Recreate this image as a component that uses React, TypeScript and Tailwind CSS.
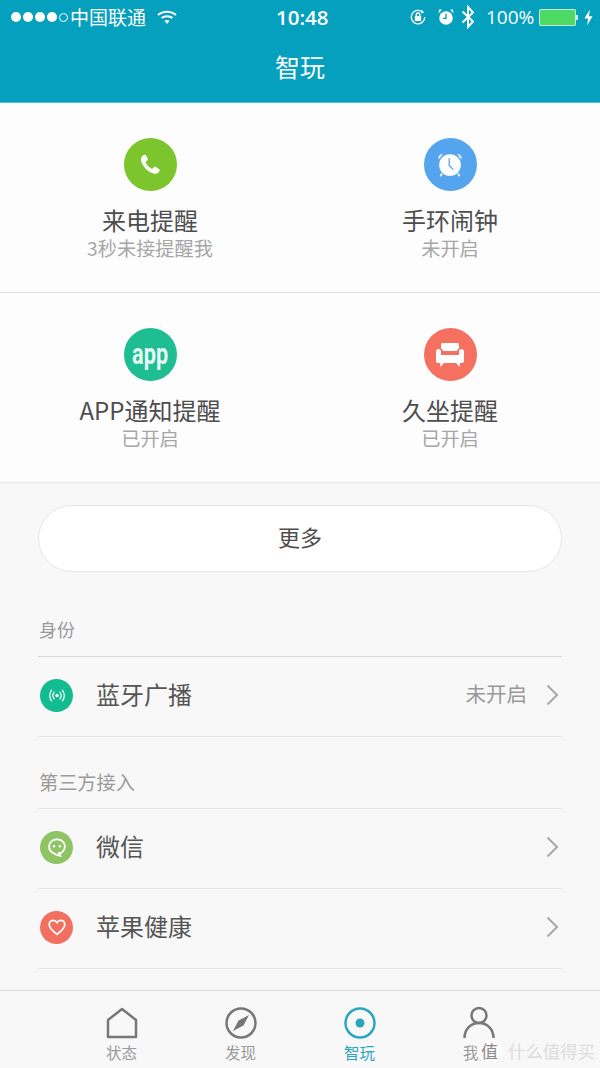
const CJK = "font-['Noto_Sans_CJK_SC','Noto_Sans',sans-serif]";

function Chevron() {
  return (
    <svg width="16" height="24" viewBox="0 0 16 24" fill="none" stroke="#a8a8a8" strokeWidth="2">
      <path d="M4.500 2.500 L14 12 L4.500 21.500" />
    </svg>
  );
}

function PhoneIcon() {
  return (
    <svg width="24" height="24" viewBox="0 0 26 26" fill="#fff">
      <path d="M6.200 2.200 C7.200 1.600 8.200 1.900 8.800 2.900 L10.400 5.900 C10.900 6.800 10.700 7.700 9.900 8.300 L8.600 9.300 C8.200 9.700 8.200 10.100 8.400 10.600 C9.600 13 11.600 15.200 14.400 16.900 C14.900 17.200 15.400 17.200 15.800 16.800 L17 15.600 C17.700 14.900 18.600 14.800 19.400 15.300 L22.600 17.200 C23.600 17.800 23.800 18.900 23.200 19.800 C21.900 21.800 20 22.900 17.800 22.500 C10.800 21 4.600 14.200 3.300 8.400 C2.800 5.800 4 3.600 6.200 2.200 Z" />
    </svg>
  );
}

function ClockIcon() {
  return (
    <svg width="30" height="30" viewBox="0 0 36 36">
      <path d="M4.500 11.500 C3 8 5.500 4.500 9.500 4.800 Z M31.500 11.500 C33 8 30.500 4.500 26.500 4.800 Z" fill="#fff" fillOpacity="0.85" />
      <path d="M8.500 28 L6.500 31.500 M27.500 28 L29.500 31.500" stroke="#fff" strokeWidth="2" />
      <circle cx="18" cy="18" r="13" fill="#fff" />
      <path d="M17 10 L17 18.500 L22 23.500" fill="none" stroke="#55a4ee" strokeWidth="1.500" />
    </svg>
  );
}

function SofaIcon() {
  return (
    <svg width="28" height="24" viewBox="0 0 28 24" fill="#fff">
      <path d="M5 1.500 C5 0.700 5.800 0 6.700 0 L21.300 0 C22.200 0 23 0.700 23 1.500 L23 5.500 C21.800 5.900 21 6.800 21 8 L7 8 C7 6.800 6.200 5.900 5 5.500 Z" />
      <path d="M0 8.500 C0 7 1.200 6 2.500 6 C3.900 6 5 7 5 8.500 L5 12 L23 12 L23 8.500 C23 7 24.100 6 25.500 6 C26.800 6 28 7 28 8.500 L28 18 C28 19 27.200 20 26 20 L2 20 C0.800 20 0 19 0 18 Z" />
      <path d="M4 20 L8 20 L4.500 24 Z M20 20 L24 20 L23.500 24 Z" />
    </svg>
  );
}

function BroadcastIcon() {
  return (
    <svg width="20" height="17" viewBox="0 0 24 20" fill="none" stroke="#fff" strokeWidth="1.500" strokeLinecap="round">
      <circle cx="12" cy="10" r="2" fill="#fff" stroke="none" />
      <path d="M8.500 6 C6.800 8.300 6.800 11.700 8.500 14 M15.500 6 C17.200 8.300 17.200 11.700 15.500 14" />
      <path d="M5.500 3.500 C2.500 7 2.500 13 5.500 16.500 M18.500 3.500 C21.500 7 21.500 13 18.500 16.500" />
    </svg>
  );
}

function WechatIcon() {
  return (
    <svg width="20" height="20" viewBox="0 0 24 24">
      <path d="M12 2.800 C17.500 2.800 21.500 6.500 21.500 11.300 C21.500 16 17.500 19.500 14.500 19.500 L16 22.500 C10 21.500 2.500 18 2.500 11.300 C2.500 6.500 6.500 2.800 12 2.800 Z" fill="none" stroke="#fff" strokeWidth="2.200" />
      <circle cx="8.500" cy="11" r="1.500" fill="#fff" />
      <circle cx="15.500" cy="11" r="1.500" fill="#fff" />
    </svg>
  );
}

function HeartIcon() {
  return (
    <svg width="20" height="18" viewBox="0 0 24 22" fill="none" stroke="#fff" strokeWidth="2.200">
      <path d="M12 20 C6 15.500 2.500 12.500 2.500 8 C2.500 4.800 4.800 2.800 7.500 2.800 C9.300 2.800 11 3.800 12 5.500 C13 3.800 14.700 2.800 16.500 2.800 C19.200 2.800 21.500 4.800 21.500 8 C21.500 12.500 18 15.500 12 20 Z" />
    </svg>
  );
}

function Reminder({ title, sub, bg, children }: { title: string; sub: string; bg: string; children: React.ReactNode }) {
  return (
    <div className="flex flex-col items-center pt-[35px]">
      <div className={`flex h-[53px] w-[53px] items-center justify-center rounded-full ${bg}`}>{children}</div>
      <div className="mt-[13px] whitespace-nowrap text-[24px] leading-[32px] text-[#4d4d4d]">{title}</div>
      <div className="whitespace-nowrap text-[19.200px] leading-[24px] text-[#a6a6a6]">{sub}</div>
    </div>
  );
}

function Row({ label, value, bg, children }: { label: string; value?: string; bg: string; children: React.ReactNode }) {
  return (
    <div className="flex h-[80px] items-center border-b border-[#e3e3e3] pb-[3px] pl-[2px] pr-[3px]">
      <div className={`flex h-[33px] w-[33px] items-center justify-center rounded-full ${bg}`}>{children}</div>
      <div className="ml-[23px] flex-1 pb-[3px] text-[24px] text-[#555555]">{label}</div>
      {value && <div className="mr-[16px] pb-[3px] text-[20.500px] text-[#999999]">{value}</div>}
      <Chevron />
    </div>
  );
}

function Tab({ label, active, children }: { label: string; active?: boolean; children: React.ReactNode }) {
  return (
    <div className="flex w-[119px] flex-col items-center pt-[14px]">
      <div className="flex h-[36px] items-center">{children}</div>
      <div className={`mt-[1px] whitespace-nowrap text-[15.500px] leading-[20px] ${active ? "text-[#2aa7bd]" : "text-[#9a9a9a]"}`}>{label}</div>
    </div>
  );
}

export default function App() {
  return (
    <div className={`relative flex h-[1068px] w-[600px] flex-col overflow-hidden bg-[#f8f8f8] ${CJK}`}>
      {/* Status bar + title */}
      <header className="h-[103px] border-b border-[#4fc3d6] bg-[#05a0be] text-white">
        <div className="flex h-[34px] items-center whitespace-nowrap pl-[11px]">
          <div className="flex items-center gap-[2px]">
            <span className="h-[10px] w-[10px] rounded-full bg-white" />
            <span className="h-[10px] w-[10px] rounded-full bg-white" />
            <span className="h-[10px] w-[10px] rounded-full bg-white" />
            <span className="h-[10px] w-[10px] rounded-full bg-white" />
            <span className="h-[9px] w-[9px] rounded-full border border-white" />
          </div>
          <span className="ml-[2px] w-[76px] text-[19px] leading-[34px]">中国联通</span>
          <svg className="ml-[11px]" width="20" height="15" viewBox="0 0 20 15" fill="none" stroke="#fff" strokeWidth="2">
            <path d="M1 5 C6 0.500 14 0.500 19 5" />
            <path d="M4.500 8 C7.500 5.500 12.500 5.500 15.500 8" />
            <path d="M10 14 L7.500 10.800 C9 9.800 11 9.800 12.500 10.800 Z" fill="#fff" stroke="none" />
          </svg>
          <span className="ml-[99px] w-[54px] font-['Open_Sans',sans-serif] text-[20.500px] font-semibold leading-[34px]">10:48</span>
          <svg className="ml-[79px]" width="18" height="18" viewBox="0 0 20 20" fill="none" stroke="#fff" strokeWidth="1.500">
            <path d="M17.500 10 A7.500 7.500 0 1 1 15 4.500" />
            <path d="M14 2 L17 5 L13.500 6 Z" fill="#fff" stroke="none" />
            <rect x="6.500" y="9" width="7" height="5.500" fill="#fff" stroke="none" />
            <path d="M8 9 V7.500 A2 2 0 0 1 12 7.500 V9" />
          </svg>
          <svg className="ml-[10px]" width="18" height="18" viewBox="0 0 20 20" fill="#fff">
            <circle cx="10" cy="11" r="7.500" />
            <path d="M1.500 6 L5.500 2 L2.500 1.500 Z M18.500 6 L14.500 2 L17.500 1.500 Z" />
            <path d="M10 6.500 V11.500 H6.500" fill="none" stroke="#05a0be" strokeWidth="1.500" />
          </svg>
          <svg className="ml-[6px]" width="14" height="24" viewBox="0 0 14 24" fill="none" stroke="#fff" strokeWidth="2">
            <path d="M1.500 6.500 L12 16.500 L7 22 V2 L12 7.500 L1.500 17.500" />
          </svg>
          <span className="ml-[11px] w-[48px] font-['Open_Sans',sans-serif] text-[19px] leading-[34px]">100%</span>
          <div className="ml-[5px] flex items-center">
            <div className="h-[17px] w-[37px] rounded-[2px] border border-white/70 bg-[#4cd964]" />
            <div className="h-[5px] w-[2px] bg-white/80" />
          </div>
          <svg className="ml-[6px]" width="9" height="17" viewBox="0 0 10 18" fill="#fff">
            <path d="M6.500 0 L0.500 10 H4.500 L3.500 18 L9.500 7.500 H5.500 Z" />
          </svg>
        </div>
        <div className="text-center text-[25px] leading-[64px]">智玩</div>
      </header>

      {/* Reminders */}
      <section className="bg-[#fdfdfd]">
        <div className="grid h-[190px] grid-cols-2 border-b border-[#e0e0e0]">
          <Reminder title="来电提醒" sub="3秒未接提醒我" bg="bg-[#7cc52d]">
            <PhoneIcon />
          </Reminder>
          <Reminder title="手环闹钟" sub="未开启" bg="bg-[#55a4ee]">
            <ClockIcon />
          </Reminder>
        </div>
        <div className="grid h-[190px] grid-cols-2 border-b border-[#e6e6e6]">
          <Reminder title="APP通知提醒" sub="已开启" bg="bg-[#1ebd92]">
            <span className="font-['Roboto',sans-serif] text-[29px] font-bold leading-none text-[#e6f8f3] [transform:scaleX(0.75)]">app</span>
          </Reminder>
          <Reminder title="久坐提醒" sub="已开启" bg="bg-[#f5705f]">
            <SofaIcon />
          </Reminder>
        </div>
      </section>

      <main className="flex-1 px-[38px]">
        <button
          type="button"
          className="mt-[22px] h-[67px] w-full rounded-full border border-[#e6e6e6] bg-white pb-[4px] text-[22px] text-[#4d4d4d]"
        >
          更多
        </button>

        <div className="mt-[44px] pl-[1px] text-[18px] leading-[27px] text-[#9a9a9a]">身份</div>
        <div className="mt-[13px] border-t border-[#d9d9d9]">
          <Row label="蓝牙广播" value="未开启" bg="bg-[#12bb90]">
            <BroadcastIcon />
          </Row>
        </div>

        <div className="mt-[32px] pl-[1px] text-[19.200px] leading-[27px] text-[#9a9a9a]">第三方接入</div>
        <div className="mt-[12px] border-t border-[#e3e3e3]">
          <Row label="微信" bg="bg-[#8fc465]">
            <WechatIcon />
          </Row>
          <Row label="苹果健康" bg="bg-[#f2705f]">
            <HeartIcon />
          </Row>
        </div>
      </main>

      {/* Tab bar */}
      <nav className="flex h-[78px] justify-center border-t border-[#dcdcdc] bg-[#f8f8f8]">
        <Tab label="状态">
          <svg width="32" height="32" viewBox="0 0 32 32" fill="none" stroke="#777777" strokeWidth="2.500" strokeLinejoin="round">
            <path d="M2 13 L16 2 L30 13 V30 H2 Z" />
          </svg>
        </Tab>
        <Tab label="发现">
          <svg width="32" height="32" viewBox="0 0 32 32">
            <circle cx="16" cy="16" r="14.500" fill="none" stroke="#777777" strokeWidth="2.500" />
            <path d="M24 8 L18.500 18.500 L8 24 L13.500 13.500 Z" fill="#777777" />
          </svg>
        </Tab>
        <Tab label="智玩" active>
          <svg width="32" height="32" viewBox="0 0 32 32">
            <circle cx="16" cy="16" r="14.500" fill="none" stroke="#2aa7bd" strokeWidth="2.500" />
            <circle cx="16" cy="16" r="4.500" fill="#2aa7bd" />
          </svg>
        </Tab>
        <Tab label="我的">
          <svg width="32" height="34" viewBox="0 0 32 34" fill="none" stroke="#777777" strokeWidth="2.500">
            <circle cx="16" cy="9.500" r="7.500" />
            <path d="M1.500 32 C1.500 23 8 17 16 17 C24 17 30.500 23 30.500 32" />
          </svg>
        </Tab>
      </nav>

      {/* Watermark */}
      <div className="absolute left-[477px] top-[1039px] flex h-[25px] items-center">
        <div className="flex h-[25px] w-[25px] items-center justify-center rounded-full bg-[#fafafa] pb-[2px] text-[17px] text-[#8a8a8a]">值</div>
        <span className="ml-[6px] whitespace-nowrap text-[17.400px] text-[#dcdcdc]">什么值得买</span>
      </div>
    </div>
  );
}
